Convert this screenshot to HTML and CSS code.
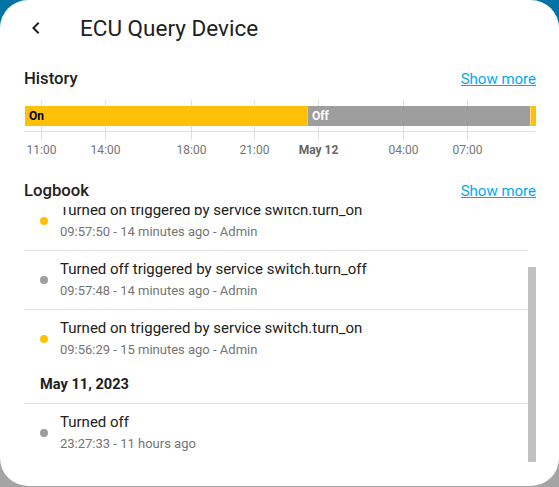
FILE: index.html
```html
<!DOCTYPE html>
<html lang="en">
<head>
<meta charset="utf-8">
<title>ECU Query Device</title>
<link rel="stylesheet" href="styles.css">
</head>
<body>
<div class="dialog">
  <header class="top">
    <button class="back" aria-label="Back">
      <svg viewBox="0 0 24 24" width="24" height="24"><path d="M15.41,16.58L10.83,12L15.41,7.41L14,6L8,12L14,18L15.41,16.58Z"/></svg>
    </button>
    <h1 class="title">ECU Query Device</h1>
  </header>
  <div class="content">
    <section class="history">
      <div class="sec-head"><h2>History</h2><a href="#" class="more">Show more</a></div>
      <div class="chart">
        <span class="gl" style="left:17px"></span>
        <span class="gl" style="left:81px"></span>
        <span class="gl" style="left:167px"></span>
        <span class="gl" style="left:230px"></span>
        <span class="gl" style="left:294px"></span>
        <span class="gl" style="left:379px"></span>
        <span class="gl" style="left:443px"></span>
        <div class="bar">
          <div class="seg on" style="width:282px">On</div>
          <div class="seg off" style="width:223px">Off</div>
          <div class="seg on" style="width:6px"></div>
        </div>
        <div class="axis"></div>
        <div class="ticks">
          <span style="left:17.5px">11:00</span>
          <span style="left:81.5px">14:00</span>
          <span style="left:167.5px">18:00</span>
          <span style="left:230.5px">21:00</span>
          <span class="day" style="left:294.5px">May 12</span>
          <span style="left:379.5px">04:00</span>
          <span style="left:443.5px">07:00</span>
        </div>
      </div>
    </section>
    <section class="logbook">
      <div class="sec-head"><h2>Logbook</h2><a href="#" class="more">Show more</a></div>
      <div class="log">
        <div class="log-view">
          <div class="log-inner">
            <div class="entry">
              <span class="dot on"></span>
              <div class="msg">
                <div class="primary">Turned on triggered by service switch.turn_on</div>
                <div class="secondary">09:57:50 - 14 minutes ago - Admin</div>
              </div>
            </div>
            <div class="entry">
              <span class="dot off"></span>
              <div class="msg">
                <div class="primary">Turned off triggered by service switch.turn_off</div>
                <div class="secondary">09:57:48 - 14 minutes ago - Admin</div>
              </div>
            </div>
            <div class="entry">
              <span class="dot on"></span>
              <div class="msg">
                <div class="primary">Turned on triggered by service switch.turn_on</div>
                <div class="secondary">09:56:29 - 15 minutes ago - Admin</div>
              </div>
            </div>
            <div class="date">May 11, 2023</div>
            <div class="entry">
              <span class="dot off"></span>
              <div class="msg">
                <div class="primary">Turned off</div>
                <div class="secondary">23:27:33 - 11 hours ago</div>
              </div>
            </div>
          </div>
        </div>
        <div class="scrollbar"><div class="thumb"></div></div>
      </div>
    </section>
  </div>
</div>
</body>
</html>
```
FILE: styles.css
```css
* { box-sizing: border-box; }

html, body {
  margin: 0;
  height: 487px;
  overflow: hidden;
}

body {
  background: linear-gradient(#0273a6 0, #0273a6 50%, #a4a4a4 50%, #a4a4a4 100%);
  font-family: Roboto, "Noto Sans", sans-serif;
  color: #212121;
}

.dialog {
  width: 559px;
  height: 486px;
  background: #fff;
  border-radius: 28px;
  overflow: hidden;
  display: flex;
  flex-direction: column;
}

.top {
  height: 56px;
  flex: none;
  display: flex;
  align-items: center;
  padding: 0 12px;
}

.back {
  width: 48px;
  height: 48px;
  border: 0;
  padding: 0;
  background: transparent;
  display: flex;
  align-items: center;
  justify-content: center;
  margin-right: 20px;
}

.back svg { fill: #212121; display: block; }

.title {
  margin: 0;
  font-size: 22.5px;
  line-height: 28px;
  font-weight: 400;
  color: #212121;
}

.content {
  padding: 0 23px 24px 24px;
  flex: 1;
  display: flex;
  flex-direction: column;
}

.sec-head {
  display: flex;
  justify-content: space-between;
  align-items: center;
  height: 24px;
}

.sec-head h2 {
  margin: 0;
  font-size: 16.7px;
  line-height: 24px;
  font-weight: 500;
  color: #212121;
}

.more {
  font-size: 15px;
  line-height: 20px;
  color: #03a9f4;
  text-decoration: underline;
}

.history { margin-top: 11px; }

.chart {
  position: relative;
  margin-top: 9px;
  padding-top: 6px;
  height: 58px;
}

.gl {
  position: absolute;
  top: 0;
  width: 1px;
  height: 40px;
  background: #e0e0e0;
}

.bar {
  position: relative;
  display: flex;
  margin-left: 1px;
  height: 20px;
}

.seg {
  height: 20px;
  font-size: 12px;
  font-weight: 700;
  line-height: 20px;
  padding-left: 4px;
  overflow: hidden;
  white-space: nowrap;
}

.seg.on { background: #ffc107; color: #000; }
.seg.off { background: #9e9e9e; color: #fff; }
.seg + .seg { border-left: 1px solid rgba(255, 255, 255, 0.45); }

.axis {
  margin-top: 5px;
  height: 1px;
  background: #e0e0e0;
}

.ticks {
  position: relative;
  margin-top: 10px;
  height: 16px;
}

.ticks span {
  position: absolute;
  top: 0;
  transform: translateX(-50%);
  font-size: 12px;
  line-height: 16px;
  color: #757575;
  white-space: nowrap;
}

.ticks .day { font-weight: 700; color: #666; }

.logbook { margin-top: 21px; }

.log {
  margin-top: 4px;
  height: 255px;
  display: flex;
}

.log-view {
  flex: 1;
  min-width: 0;
  overflow: hidden;
  display: flex;
  flex-direction: column;
  justify-content: flex-end;
}

.log-inner { flex: none; }

.scrollbar {
  flex: none;
  width: 8px;
  display: flex;
  flex-direction: column;
  justify-content: flex-end;
}

.thumb {
  height: 195px;
  background: #c1c1c1;
}

.date {
  padding: 6px 16px 9px;
  font-size: 14.6px;
  line-height: 20px;
  font-weight: 700;
  color: #212121;
}

.entry {
  display: flex;
  align-items: center;
  gap: 12px;
  padding: 8px 16px;
  border-top: 1px solid #e0e0e0;
}

.dot {
  flex: none;
  width: 8px;
  height: 8px;
  border-radius: 50%;
}

.dot.on { background: #ffc107; }
.dot.off { background: #9e9e9e; }

.primary {
  font-size: 15px;
  line-height: 20px;
  color: #212121;
}

.secondary {
  margin-top: 2px;
  font-size: 13px;
  line-height: 20px;
  color: #757575;
}
```
